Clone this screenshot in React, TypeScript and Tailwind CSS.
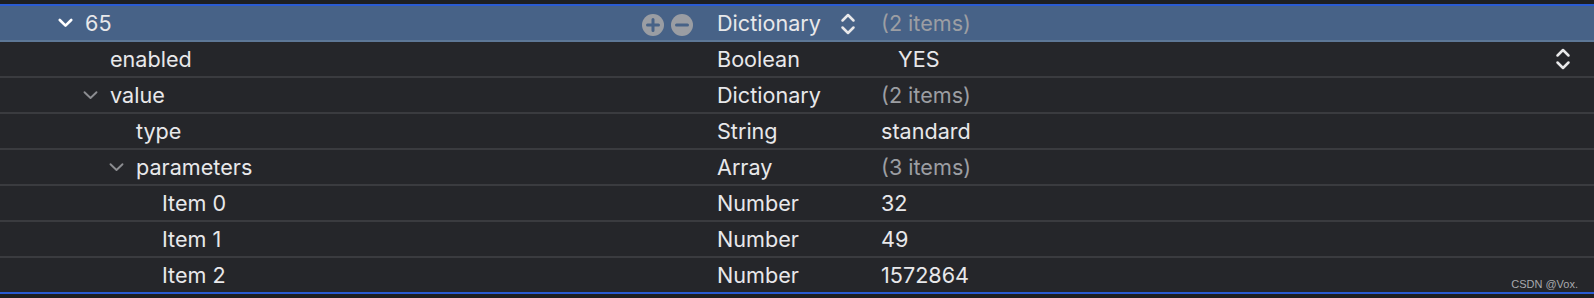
import React from "react";

type Row = {
  key: string;
  level: number;
  chevron?: "white" | "grey";
  type: string;
  value: string;
  valueMuted?: boolean;
  selected?: boolean;
  popup?: boolean;
};

const rows: Row[] = [
  { key: "65", level: 0, chevron: "white", type: "Dictionary", value: "(2 items)", valueMuted: true, selected: true },
  { key: "enabled", level: 1, type: "Boolean", value: "YES", popup: true },
  { key: "value", level: 1, chevron: "grey", type: "Dictionary", value: "(2 items)", valueMuted: true },
  { key: "type", level: 2, type: "String", value: "standard" },
  { key: "parameters", level: 2, chevron: "grey", type: "Array", value: "(3 items)", valueMuted: true },
  { key: "Item 0", level: 3, type: "Number", value: "32" },
  { key: "Item 1", level: 3, type: "Number", value: "49" },
  { key: "Item 2", level: 3, type: "Number", value: "1572864" },
];

const levelPad: Record<number, string> = {
  0: "pl-[58px]",
  1: "pl-[83px]",
  2: "pl-[109px]",
  3: "pl-[135px]",
};

function Chevron({ color }: { color: "white" | "grey" }) {
  if (color === "white") {
    return (
      <svg width="15" height="10" viewBox="0 0 15 10" className="shrink-0">
        <path d="M1.8 2 L7.5 7.6 L13.2 2" fill="none" stroke="#ffffff" strokeWidth="2.6" strokeLinecap="round" strokeLinejoin="round" />
      </svg>
    );
  }
  return (
    <svg width="15" height="10" viewBox="0 0 15 10" className="shrink-0">
      <path d="M1.5 2.2 L7.5 8 L13.5 2.2" fill="none" stroke="#8c8d91" strokeWidth="1.9" strokeLinecap="round" strokeLinejoin="round" />
    </svg>
  );
}

function UpDown() {
  return (
    <svg width="16" height="24" viewBox="0 0 16 24" className="shrink-0">
      <path d="M2.5 8.5 L8 3 L13.5 8.5" fill="none" stroke="#e8e8ea" strokeWidth="2.5" strokeLinecap="round" strokeLinejoin="round" />
      <path d="M2.5 15.5 L8 21 L13.5 15.5" fill="none" stroke="#e8e8ea" strokeWidth="2.5" strokeLinecap="round" strokeLinejoin="round" />
    </svg>
  );
}

function PlusMinus() {
  return (
    <div className="flex items-center gap-[7px] mt-[3px]">
      <svg width="22" height="22" viewBox="0 0 22 22">
        <circle cx="11" cy="11" r="11" fill="#9a9da3" />
        <path d="M11 5.5 V16.5 M5.5 11 H16.5" stroke="#476287" strokeWidth="3" strokeLinecap="round" />
      </svg>
      <svg width="22" height="22" viewBox="0 0 22 22">
        <circle cx="11" cy="11" r="11" fill="#9a9da3" />
        <path d="M5.5 11 H16.5" stroke="#476287" strokeWidth="3" strokeLinecap="round" />
      </svg>
    </div>
  );
}

export default function App() {
  return (
    <div
      className="relative w-[1594px] h-[298px] bg-[#1e1f22] pt-[4px] text-[21.6px] text-[#e8e8ea]"
      style={{ fontFamily: "Inter, 'Noto Sans', 'Liberation Sans', sans-serif" }}
    >
      <div className="h-[2px] bg-[#2a5bd2]" />
      {rows.map((r, i) => {
        const last = i === rows.length - 1;
        const bg = r.selected ? "bg-[#476287]" : "bg-[#25262a]";
        const border = r.selected
          ? "border-[#5d7796]"
          : last
          ? "border-[#2a5bd2]"
          : "border-[#3a3b3f]";
        return (
          <div key={i} className={`flex h-[36px] border-b-2 ${bg} ${border}`}>
            <div className={`flex items-center w-[717px] ${levelPad[r.level]}`}>
              {r.chevron ? (
                <Chevron color={r.chevron} />
              ) : (
                <div className="w-[15px] shrink-0" />
              )}
              <span className="ml-[12px] mt-[2px] leading-none">{r.key}</span>
              {r.selected && (
                <div className="ml-auto mr-[24px]">
                  <PlusMinus />
                </div>
              )}
            </div>
            <div className="flex items-center w-[164px]">
              <span className="mt-[2px] leading-none">{r.type}</span>
              {r.selected && (
                <div className="ml-[19px] mt-[1px]">
                  <UpDown />
                </div>
              )}
            </div>
            <div className="flex items-center flex-1 pr-[23px]">
              <span
                className={`mt-[2px] leading-none ${r.valueMuted ? "text-[#9c9ea3]" : ""} ${r.popup ? "ml-[17px]" : ""}`}
              >
                {r.value}
              </span>
              {r.popup && (
                <div className="ml-auto">
                  <UpDown />
                </div>
              )}
            </div>
          </div>
        );
      })}
      <div
        className="absolute right-[16px] top-[279px] text-[11px] leading-none text-[#a8a9ad]"
        style={{ fontFamily: "'Liberation Sans', Arial, sans-serif" }}
      >
        CSDN @Vox.
      </div>
    </div>
  );
}
